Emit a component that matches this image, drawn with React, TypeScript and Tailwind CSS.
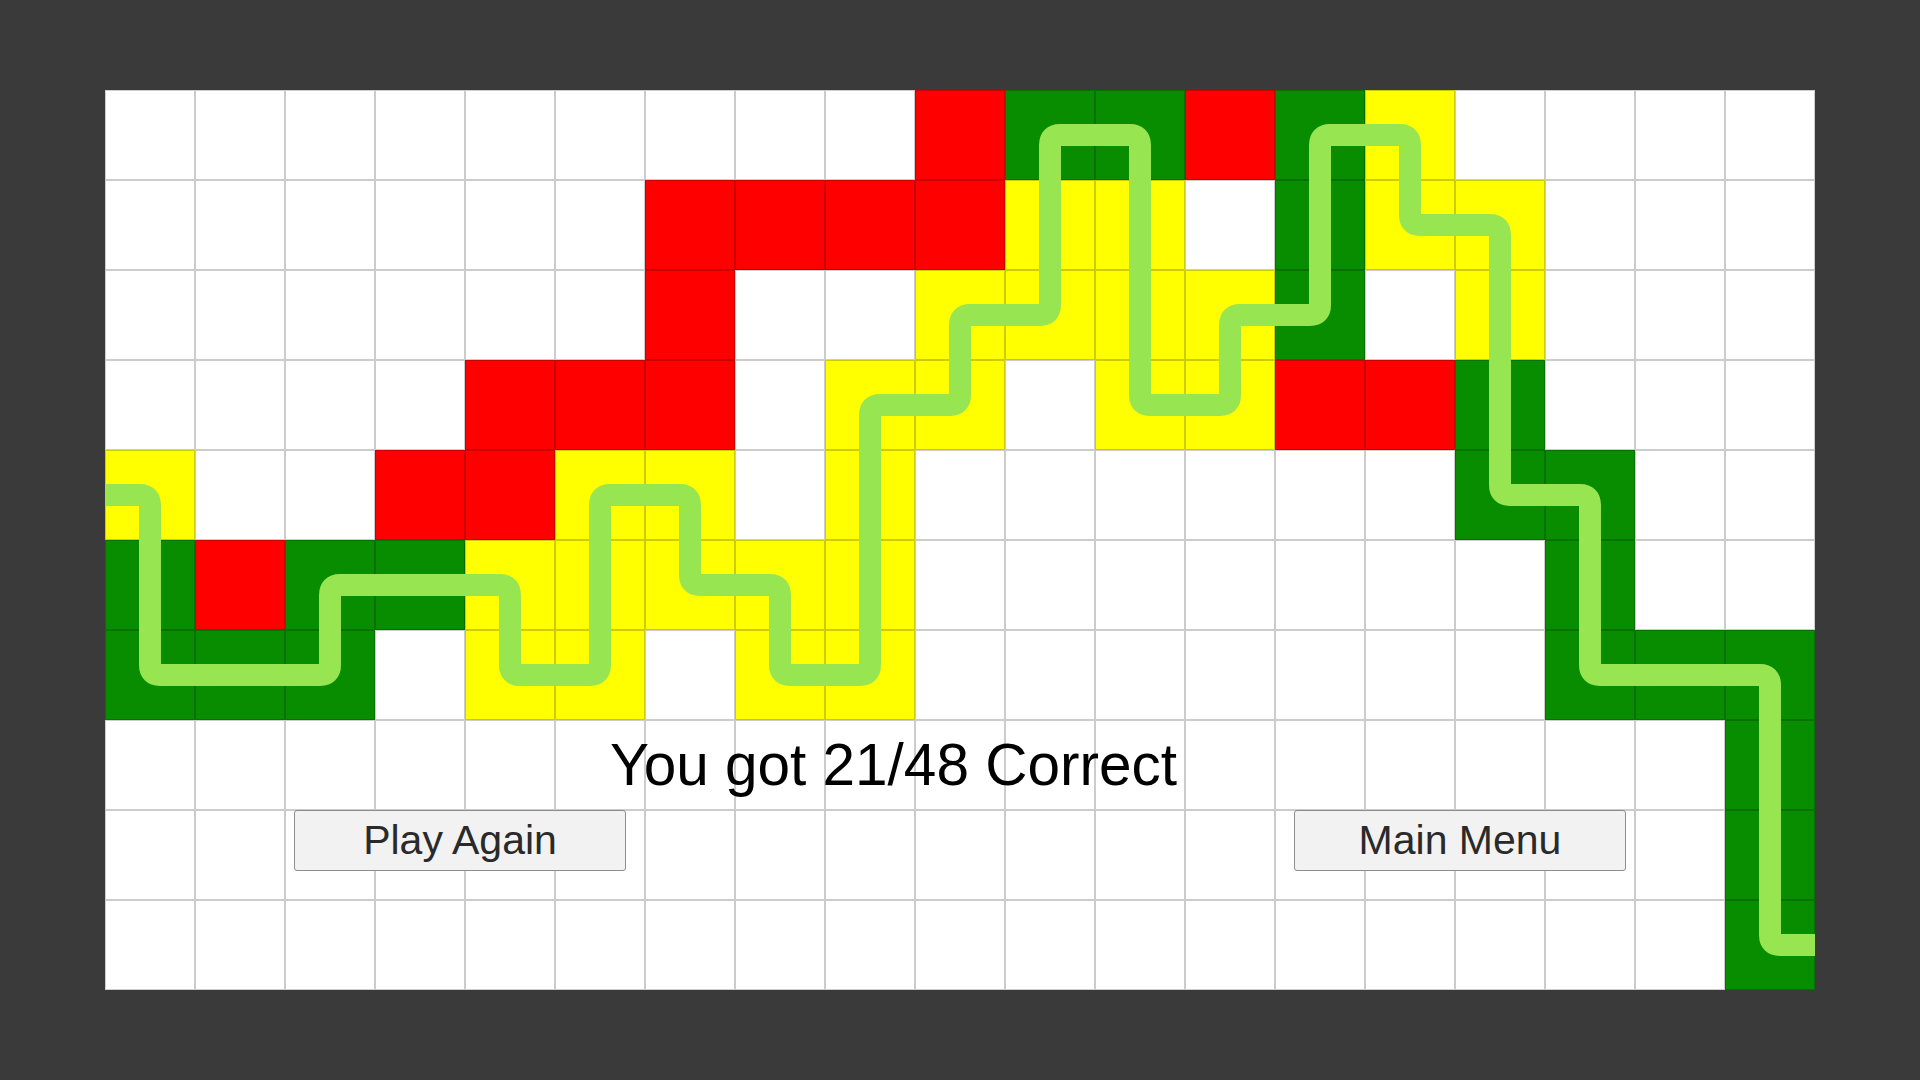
const cellSize = 90;

const boardRows = [
  "WWWWWWWWWRGGRGYWWWW",
  "WWWWWWRRRRYYWGYYWWW",
  "WWWWWWRWWYYYYGWYWWW",
  "WWWWRRRWYYWYYRRGWWW",
  "YWWRRYYWYWWWWWWGGWW",
  "GRGGYYYYYWWWWWWWGWW",
  "GGGWYYWYYWWWWWWWGGG",
  "WWWWWWWWWWWWWWWWWWG",
  "WWWWWWWWWWWWWWWWWWG",
  "WWWWWWWWWWWWWWWWWWG",
];

const cellColors: Record<string, string> = {
  W: "bg-white",
  R: "bg-[#ff0000]",
  G: "bg-[#088c00]",
  Y: "bg-[#ffff00]",
};

// path corners, in px from the board's top-left
const pathPoints: [number, number][] = [
  [0, 405], [45, 405], [45, 585], [225, 585], [225, 495], [405, 495],
  [405, 585], [495, 585], [495, 405], [585, 405], [585, 495], [675, 495],
  [675, 585], [765, 585], [765, 315], [855, 315], [855, 225], [945, 225],
  [945, 45], [1035, 45], [1035, 315], [1125, 315], [1125, 225], [1215, 225],
  [1215, 45], [1305, 45], [1305, 135], [1395, 135], [1395, 405], [1485, 405],
  [1485, 585], [1665, 585], [1665, 855], [1710, 855],
];

function buildPath(points: [number, number][], radius: number): string {
  let d = `M ${points[0][0]} ${points[0][1]}`;
  for (let i = 1; i < points.length - 1; i++) {
    const [px, py] = points[i - 1];
    const [cx, cy] = points[i];
    const [nx, ny] = points[i + 1];
    const inX = Math.sign(cx - px);
    const inY = Math.sign(cy - py);
    const outX = Math.sign(nx - cx);
    const outY = Math.sign(ny - cy);
    d += ` L ${cx - inX * radius} ${cy - inY * radius}`;
    d += ` Q ${cx} ${cy} ${cx + outX * radius} ${cy + outY * radius}`;
  }
  const last = points[points.length - 1];
  d += ` L ${last[0]} ${last[1]}`;
  return d;
}

function Board() {
  return (
    <div className="grid grid-cols-[repeat(19,90px)] grid-rows-[repeat(10,90px)]">
      {boardRows.map((row, r) =>
        row.split("").map((cell, c) => (
          <div
            key={`${r}-${c}`}
            className={`border border-black/20 ${cellColors[cell]}`}
          />
        )),
      )}
    </div>
  );
}

export default function App() {
  const width = cellSize * 19;
  const height = cellSize * 10;

  return (
    <div className="flex h-screen w-full items-center justify-center bg-[#3a3a3a] font-['Liberation_Sans',Arial,sans-serif]">
      <div className="relative h-[900px] w-[1710px]">
        <Board />

        <svg
          className="pointer-events-none absolute inset-0"
          width={width}
          height={height}
          viewBox={`0 0 ${width} ${height}`}
        >
          <path
            d={buildPath(pathPoints, 10)}
            fill="none"
            stroke="#97e651"
            strokeWidth={22}
            strokeLinejoin="round"
          />
        </svg>

        <div className="absolute inset-x-0 top-[646px] flex flex-col">
          <p className="pl-[505px] text-[58.5px] leading-none text-black">
            You got 21/48 Correct
          </p>
          <div className="mt-[15px] flex justify-between px-[189px]">
            <button
              type="button"
              className="h-[61px] w-[332px] rounded-[3px] border border-[#8c8c8c] bg-[#f2f2f2] text-[41px] leading-none text-[#2a2a2a]"
            >
              Play Again
            </button>
            <button
              type="button"
              className="h-[61px] w-[332px] rounded-[3px] border border-[#8c8c8c] bg-[#f2f2f2] text-[41px] leading-none text-[#2a2a2a]"
            >
              Main Menu
            </button>
          </div>
        </div>
      </div>
    </div>
  );
}
